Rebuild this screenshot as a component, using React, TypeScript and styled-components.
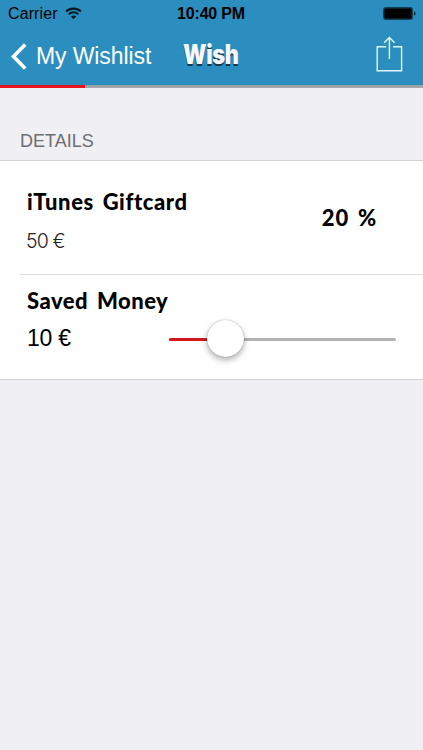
import React from "react";
import styled, { createGlobalStyle } from "styled-components";

const GlobalStyle = createGlobalStyle`
  * { box-sizing: border-box; }
  body {
    margin: 0;
    background: #efeff4;
    font-family: "Liberation Sans", Arial, sans-serif;
    color: #000;
  }
`;

const Screen = styled.main`
  width: 423px;
  height: 750px;
  overflow: hidden;
  background: #efeff4;
`;

const Header = styled.header`
  height: 85px;
  background: #2c8ebf;
`;

const StatusBar = styled.div`
  height: 28px;
  display: grid;
  grid-template-columns: 1fr auto 1fr;
  align-items: center;
  padding: 0 7px 0 8px;
  line-height: 20px;
`;

const Carrier = styled.div`
  display: flex;
  align-items: center;
  gap: 7px;
  font-size: 16px;
  letter-spacing: 0.1px;

  svg { margin-bottom: 2px; }
`;

const Clock = styled.div`
  font-size: 16px;
  font-weight: 700;
  letter-spacing: -0.2px;
  margin-right: 2px;
`;

const BatterySlot = styled.div`
  display: flex;
  justify-content: flex-end;
  padding-bottom: 1px;
`;

const NavBar = styled.nav`
  height: 57px;
  display: grid;
  grid-template-columns: 1fr auto 1fr;
  padding: 0 20px 0 11px;
`;

const BackButton = styled.button`
  display: flex;
  align-items: center;
  gap: 9px;
  height: 56px;
  padding: 0;
  border: 0;
  background: none;
  color: #fff;
  font: 23px/28px "Liberation Sans", Arial, sans-serif;
  letter-spacing: -0.1px;
  white-space: nowrap;
`;

const Title = styled.h1`
  margin: 11px 0 0 8px;
  font: 900 26.5px/30px Inter, "Liberation Sans", sans-serif;
  letter-spacing: -0.4px;
  color: #f5f8fa;
  text-shadow: 0 1.5px 0 #15384b;
  width: 56px;
  white-space: nowrap;
  transform: scaleX(0.82);
  transform-origin: left;
`;

const ShareButton = styled.button`
  justify-self: end;
  height: 45px;
  margin-top: 8px;
  padding: 0;
  border: 0;
  background: none;
  line-height: 0;
  align-self: start;
  display: flex;
`;

const Progress = styled.div`
  height: 3px;
  background: linear-gradient(#929ba3, #adadb1);
`;

const ProgressFill = styled.div`
  height: 3px;
  background: #e8141c;
`;

const SectionTitle = styled.h2`
  height: 73px;
  margin: 0;
  padding: 42px 20px 0;
  border-bottom: 1px solid #d2d2d7;
  font-size: 18px;
  line-height: 22px;
  font-weight: 400;
  color: #6d6d72;
`;

const Group = styled.section`
  background: #fff;
  border-bottom: 1px solid #d0d0d6;
  height: 219px;
`;

const WishRow = styled.div`
  height: 114px;
  margin-left: 20px;
  padding: 26px 46px 0 7px;
  display: flex;
  justify-content: space-between;
  border-bottom: 1px solid #dedee1;
`;

const SavingsRow = styled.div`
  padding: 11px 27px 0 27px;
`;

const Heading = styled.h3<{ $spacing: number }>`
  margin: 0;
  font: 900 22px/30px Lato, sans-serif;
  letter-spacing: ${(p) => p.$spacing}px;
  word-spacing: 3px;
  white-space: nowrap;
`;

const Percentage = styled(Heading)`
  padding-top: 16px;
`;

const Price = styled.div`
  margin: 11px 0 0 -1px;
  font: 300 19.5px/26px Inter, sans-serif;
  letter-spacing: -0.9px;
  color: #222;
`;

const SliderLine = styled.div`
  display: flex;
  justify-content: space-between;
  height: 44px;
`;

const Amount = styled.div`
  font-size: 23px;
  letter-spacing: -0.25px;
  line-height: 44px;
`;

const Slider = styled.div`
  width: 227px;
  height: 46px;
  display: flex;
  align-items: center;
`;

const Track = styled.div`
  position: relative;
  width: 100%;
  height: 3px;
  border-radius: 2px;
  background: #b3b3b3;
`;

const TrackFill = styled.div`
  height: 3px;
  border-radius: 2px;
  background: #d3171d;
`;

const Thumb = styled.div`
  position: absolute;
  top: -18px;
  width: 37px;
  height: 37px;
  border-radius: 50%;
  background: #fff;
  box-shadow: 0 0 1px rgba(0, 0, 0, 0.45), 0 3px 6px rgba(0, 0, 0, 0.32);
`;

function WifiIcon() {
  return (
    <svg width="17" height="13" viewBox="0 0 17 13" fill="none" stroke="#061c27">
      <path d="M1 4.6C5.2.6 11.8.6 16 4.6" strokeWidth="2.1" />
      <path d="M3.7 7.3c2.7-2.6 6.9-2.6 9.6 0" strokeWidth="2" />
      <path d="M5.8 9.5c1.5-1.5 3.9-1.5 5.4 0L8.5 12.2Z" fill="#061c27" stroke="none" />
    </svg>
  );
}

function BatteryIcon() {
  return (
    <svg width="33" height="13" viewBox="0 0 33 13">
      <rect x=".5" y=".5" width="29" height="12" rx="1.8" fill="none" stroke="#0f3d54" />
      <rect x="1.2" y="1.2" width="27.6" height="10.6" rx=".8" fill="#000" />
      <path d="M31 4.5c2 .5 2 3.5 0 4Z" fill="#061c27" />
    </svg>
  );
}

function BackIcon() {
  return (
    <svg width="16" height="27" viewBox="0 0 16 27" fill="none" stroke="#fff" strokeWidth="3.6">
      <path d="M14.2 1.5 2.5 13.5l11.7 12" />
    </svg>
  );
}

function ShareIcon() {
  return (
    <svg width="27" height="36" viewBox="0 0 27 36" fill="none" stroke="#e4f5fd" strokeWidth="1.4">
      <path d="M10 10.8H1.2v23.9h24.4V10.8H17M13.4 23V1.6M8.2 6.7l5.2-5.2 5.2 5.2" />
    </svg>
  );
}

const price = 50;
const saved = 10;
const percent = (saved / price) * 100;

export default function App() {
  return (
    <Screen>
      <GlobalStyle />
      <Header>
        <StatusBar>
          <Carrier>Carrier <WifiIcon /></Carrier>
          <Clock>10:40 PM</Clock>
          <BatterySlot><BatteryIcon /></BatterySlot>
        </StatusBar>
        <NavBar>
          <BackButton><BackIcon />My Wishlist</BackButton>
          <Title>Wish</Title>
          <ShareButton aria-label="Share"><ShareIcon /></ShareButton>
        </NavBar>
      </Header>
      <Progress><ProgressFill style={{ width: `${percent}%` }} /></Progress>
      <SectionTitle>DETAILS</SectionTitle>
      <Group>
        <WishRow>
          <div>
            <Heading $spacing={0.57}>iTunes Giftcard</Heading>
            <Price>{price} €</Price>
          </div>
          <Percentage $spacing={0.8}>{percent} %</Percentage>
        </WishRow>
        <SavingsRow>
          <Heading $spacing={0.5}>Saved Money</Heading>
          <SliderLine>
            <Amount>{saved} €</Amount>
            <Slider>
              <Track>
                <TrackFill style={{ width: `${percent}%` }} />
                <Thumb style={{ left: `calc((100% - 37px) * ${percent / 100})` }} />
              </Track>
            </Slider>
          </SliderLine>
        </SavingsRow>
      </Group>
    </Screen>
  );
}
